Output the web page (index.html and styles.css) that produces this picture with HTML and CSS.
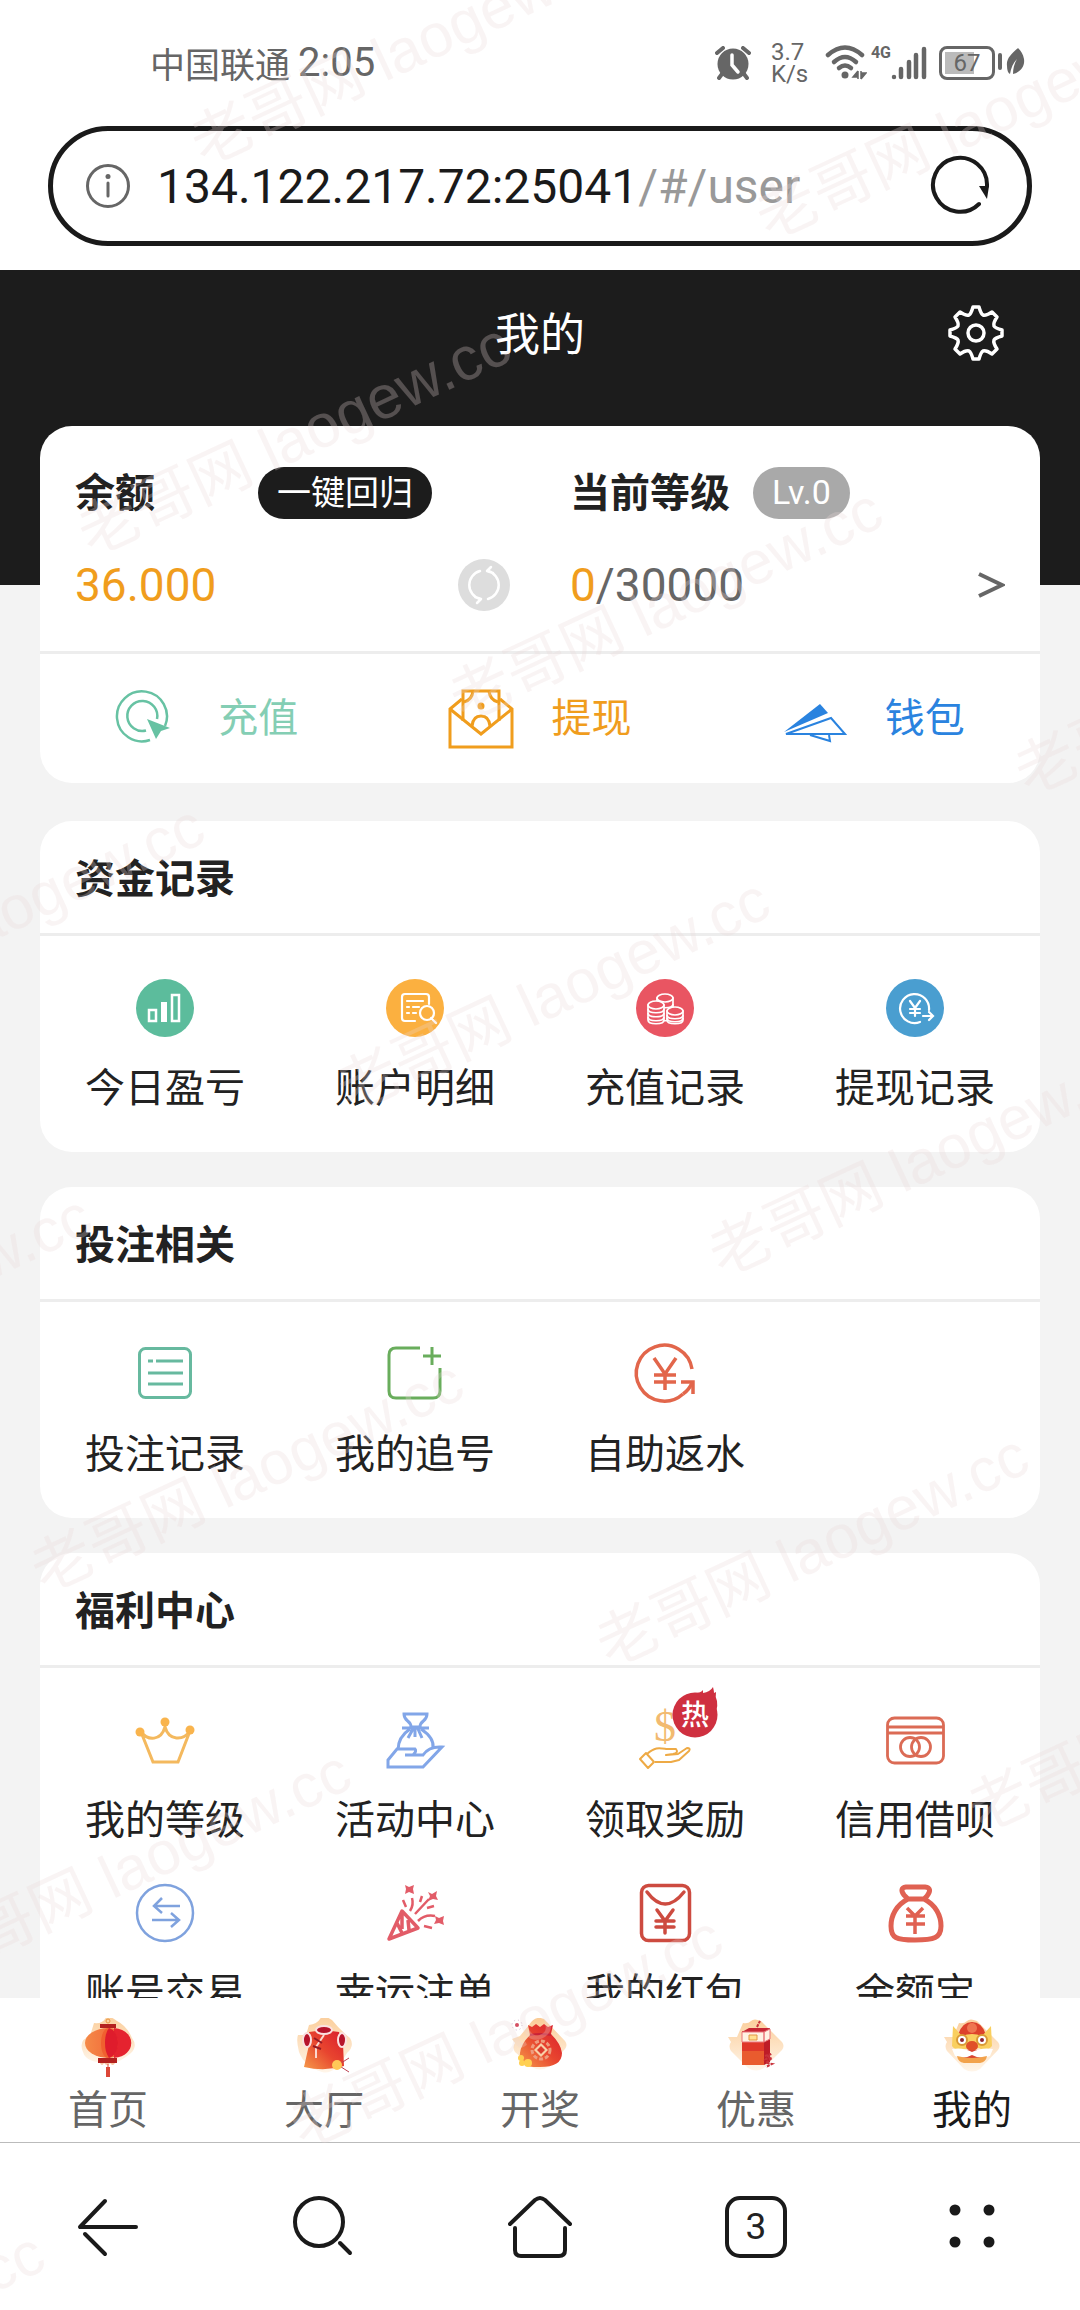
FILE: index.html
```html
<!DOCTYPE html>
<html lang="zh-CN">
<head>
<meta charset="utf-8">
<meta name="viewport" content="width=device-width, initial-scale=1">
<title>我的</title>
<link rel="stylesheet" href="styles.css">
</head>
<body>
<div class="screen">
  <div class="status">
    <span class="carrier">中国联通<span class="time">2:05</span></span>
    <div class="status-icons">
      <svg width="36" height="34" viewBox="0 0 36 34" aria-hidden="true"><circle cx="18" cy="18" r="15.500" fill="#666"/><path d="M2 7l6-5M34 7l-6-5M7 28l-3 4M29 28l3 4" stroke="#666" stroke-width="4" stroke-linecap="round"/><path d="M17 9v10l6 7" fill="none" stroke="#fff" stroke-width="3.500" stroke-linecap="round"/></svg>
      <span class="speed"><span>3.7</span><span>K/s</span></span>
      <svg width="42" height="36" viewBox="0 0 42 36" aria-hidden="true"><g fill="none" stroke="#666" stroke-width="4.500" stroke-linecap="round"><path d="M3 10Q20-5 37 10"/><path d="M9 17Q20 7 31 17"/><path d="M14 23Q20 18 26 23"/></g><circle cx="20" cy="30" r="3.500" fill="#666"/><path d="M33 26v8M33 26l-5 6h5M36 34v-8M36 34l5-6h-5" stroke="#666" stroke-width="1.500" fill="#666"/></svg>
      <span class="net">4G</span>
      <svg width="36" height="34" viewBox="0 0 36 34" aria-hidden="true"><path d="M3 31v0M10 23v8M18 16v15M25 9v22M33 3v28" stroke="#666" stroke-width="4.500" stroke-linecap="round"/></svg>
      <span class="battery"><span>67</span></span>
      <svg class="leaf" width="27" height="30" viewBox="0 0 27 30" aria-hidden="true"><path d="M2 7v13" stroke="#666" stroke-width="4" stroke-linecap="round"/><path d="M20 0C13 6 8 11 9 18c0 4 1 7 3 8 1-6 3-11 7-15-3 5-4 10-4 15 8-2 12-8 11-15-1-5-3-8-6-11z" fill="#666"/></svg>
    </div>
  </div>

  <div class="urlbar">
    <svg width="46" height="46" viewBox="0 0 46 46" aria-hidden="true"><circle cx="23" cy="23" r="20.500" fill="none" stroke="#666" stroke-width="3"/><circle cx="23" cy="13.500" r="2.500" fill="#666"/><path d="M23 20v13" stroke="#666" stroke-width="3" stroke-linecap="round"/></svg>
    <button class="address" type="button">134.122.217.72:25041<span>/#/user</span></button>
    <button class="icon-btn" type="button" aria-label="刷新"><svg width="62" height="62" viewBox="0 0 62 62"><path d="M50 49A27 27 0 1 1 58 31" fill="none" stroke="#1a1a1a" stroke-width="4" stroke-linecap="round"/><path d="M50 31h10l-2 13z" fill="#1a1a1a"/></svg></button>
  </div>

  <header class="topbar">
    <h1>我的</h1>
    <button class="icon-btn" type="button" aria-label="设置"><svg width="56" height="56" viewBox="0 0 56 56" fill="none" stroke="#fff" stroke-width="3.500" stroke-linejoin="round"><path d="M25 2h6q2 7 4 8 3 1 9-3l5 5q-4 6-3 9 1 2 8 4v6q-7 2-8 4-1 3 3 9l-5 5q-6-4-9-3-2 1-4 8h-6q-2-7-4-8-3-1-9 3l-5-5q4-6 3-9-1-2-8-4v-6q7-2 8-4 1-3-3-9l5-5q6 4 9 3 2-1 4-8z"/><circle cx="28" cy="28" r="8"/></svg></button>
  </header>

  <main class="content">
    <section class="card account">
      <div class="summary">
        <div class="line">
          <h2>余额</h2>
          <button class="pill pill-dark" type="button">一键回归</button>
        </div>
        <div class="line">
          <h2>当前等级</h2>
          <span class="pill pill-level">Lv.0</span>
        </div>
        <div class="line spread">
          <span class="num gold">36.000</span>
          <button class="icon-btn" type="button" aria-label="刷新余额"><svg width="52" height="52" viewBox="0 0 52 52"><circle cx="26" cy="26" r="26" fill="#ddd"/><g fill="none" stroke="#fff" stroke-width="2.500" stroke-linecap="round" stroke-linejoin="round"><path d="M22 12A14.500 14.500 0 0 0 22 40M30 40a14.500 14.500 0 0 0 0-28M17 38l6 2-4 4M35 14l-6-2 4-4"/></g></svg></button>
        </div>
        <a class="line spread" href="#level"><span class="num"><span class="gold">0</span>/30000</span>
          <svg width="27" height="26" viewBox="0 0 27 26" aria-hidden="true"><path d="M1 2l23 11L1 24" fill="none" stroke="#666" stroke-width="4"/></svg></a>
      </div>
      <nav class="actions">
        <a class="mint" href="#recharge"><svg width="66" height="60" viewBox="0 0 66 60" fill="none" stroke="#67c2a3" stroke-width="2.500"><path d="M35 51A25 25 0 1 1 50 37"/><path d="M31 41.500A15 15 0 1 1 42 30"/><path d="M32 30l23 9-9 3-5 8z" fill="#67c2a3" stroke="none"/></svg><span>充值</span></a>
        <a class="gold" href="#withdraw"><svg width="66" height="60" viewBox="0 0 66 60" fill="none" stroke="#f09d1d" stroke-width="3"><path d="M15 32V2h36v30"/><path d="M14 10L2 20v38h62V20L52 10"/><path d="M2 20l31 25 31-25"/><path d="M16 13q8-2 9-11M50 13q-8-2-9-11M24 37q1-10 9-10t9 10"/><circle cx="33" cy="17" r="3.500" fill="#f09d1d" stroke="none"/></svg><span>提现</span></a>
        <a class="blue" href="#wallet"><svg width="66" height="60" viewBox="0 0 66 60" fill="none" stroke="#2a83df" stroke-width="2"><path d="M2 43L38 15l8 9z" fill="#2a83df" stroke="none"/><path d="M4 45l45-16 14 16z"/><path d="M28 46l20 6-1-6"/></svg><span>钱包</span></a>
      </nav>
    </section>

    <section class="card">
      <h2 class="card-title">资金记录</h2>
      <div class="grid">
        <a href="#today"><svg viewBox="0 0 60 60"><circle cx="30" cy="30" r="29" fill="#5cbc9c"/><path d="M14 32h7v11h-7z" fill="none" stroke="#fff" stroke-width="2.500"/><path d="M26 24h6v20h-6z" fill="#fff"/><path d="M37 17h7v26h-7z" fill="none" stroke="#fff" stroke-width="2.500"/></svg>今日盈亏</a>
        <a href="#detail"><svg viewBox="0 0 60 60" fill="none"><circle cx="30" cy="30" r="29" fill="#fbb040"/><g stroke="#fff" stroke-width="2.200" stroke-linecap="round"><path d="M44 26v-7q0-3-3-3H20q-3 0-3 3v21q0 3 3 3h10M22 23h16M22 29h2M28 29h6M22 35h2M28 35h3"/><circle cx="42" cy="35" r="7"/><path d="M46 40l5 5"/></g></svg>账户明细</a>
        <a href="#recharge-log"><svg viewBox="0 0 60 60" fill="none"><circle cx="30" cy="30" r="29" fill="#e95562"/><g stroke="#fff" stroke-width="1.700" fill="#e95562"><path d="M22 20v19c0 5 16 5 16 0V20z"/><ellipse cx="30" cy="20" rx="8" ry="4"/><path d="M22 26c0 5 16 5 16 0"/><path d="M13 27v15c0 5 16 5 16 0V27z"/><path d="M13 31c0 5 16 5 16 0M13 35c0 5 16 5 16 0M13 39c0 5 16 5 16 0"/><ellipse cx="21" cy="27" rx="8" ry="4"/><path d="M32 33v9c0 5 16 5 16 0v-9z"/><path d="M32 37c0 5 16 5 16 0M32 40c0 5 16 5 16 0"/><ellipse cx="40" cy="33" rx="8" ry="4"/></g></svg>充值记录</a>
        <a href="#withdraw-log"><svg viewBox="0 0 60 60" fill="none"><circle cx="30" cy="30" r="29" fill="#4a9ed0"/><g stroke="#fff" stroke-width="2.200" stroke-linecap="round"><path d="M35 44A14.500 14.500 0 1 1 44 32"/><path d="M25 23l5 7 5-7M30 30v8M25 31h10M25 35h10M38 38h9M44 34l4 4-4 4"/></g></svg>提现记录</a>
      </div>
    </section>

    <section class="card">
      <h2 class="card-title">投注相关</h2>
      <div class="grid">
        <a href="#bets"><svg viewBox="0 0 60 60" fill="none" stroke="#67b99f" stroke-width="3"><rect x="4.500" y="4.500" width="51" height="49" rx="6"/><path d="M13 17h5M21 17h27M13 29h35M13 40h35"/></svg>投注记录</a>
        <a href="#chase"><svg viewBox="0 0 60 60" fill="none" stroke="#69ad5c" stroke-width="3"><path d="M35 4H11q-7 0-7 7v36q0 7 7 7h37q7 0 7-7V24M38 12h18M47 3v18"/></svg>我的追号</a>
        <a href="#rebate"><svg viewBox="0 0 60 60" fill="none" stroke="#e2664b" stroke-width="3.500"><path d="M57 25A28 28 0 1 0 48 50"/><path d="M46 38h12v12"/><path d="M57 39q-3 7-9 11"/><path d="M19 14l11 16 11-16M30 30v16M19 31h22M19 38h22"/></svg>自助返水</a>
      </div>
    </section>

    <section class="card">
      <h2 class="card-title">福利中心</h2>
      <div class="grid">
        <a href="#my-level"><svg viewBox="0 0 60 60" fill="none" stroke="#f4b95e" stroke-width="3"><path d="M6 22l12 30h25l12-31c-7 10-21 10-25-4-4 14-17 14-24 5z"/><g fill="#f9b44d" stroke="none"><circle cx="5" cy="22" r="4.500"/><circle cx="30" cy="12" r="4.500"/><circle cx="55" cy="20" r="4.500"/></g></svg>我的等级</a>
        <a href="#events"><svg viewBox="0 0 60 60" fill="none" stroke="#82a6e8" stroke-width="3"><path d="M19 4h23c0 8-7 6-7 13h-9c0-7-7-5-7-13zM17 18h27M25 19c-9 6-12 13-12 21M36 19c9 6 13 12 12 19M30 19v8M28 19l-5 9M33 19l4 9"/><path d="M3 50l9-11h18q2 2-2 6h-8 18q6-9 19-8L38 57H3z"/></svg>活动中心</a>
        <a href="#rewards"><svg viewBox="0 0 60 60" fill="none"><text class="dollar" x="30" y="31" text-anchor="middle">$</text><path d="M5 49l6-6 8 9-6 6zM12 44c8-7 12-6 19-5h10q3 4-3 5l-7 1 12-1 9-6q4 0 2 3L44 50l-8 2H20" stroke="#eeaa45" stroke-width="2" stroke-linejoin="round"/><circle cx="60" cy="5" r="22.500" fill="#cf3040"/><path d="M60-17q6 0 8-3v3q7-1 10-6 1 4 1 6l2-1q-1 5 1 9 1 5-1 11z" fill="#cf3040"/><text class="hot" x="60" y="15" text-anchor="middle">热</text></svg>领取奖励</a>
        <a href="#credit"><svg viewBox="0 0 60 60" fill="none" stroke="#db6b55" stroke-width="2.800"><rect x="2.500" y="8" width="56" height="45" rx="7"/><path d="M3 17h55M3 23h55"/><circle cx="25" cy="37" r="9.500"/><circle cx="36" cy="37" r="9.500"/></svg>信用借呗</a>
        <a href="#trade"><svg viewBox="0 0 60 60" fill="none" stroke="#7fa2de" stroke-width="2.500"><circle cx="30" cy="30" r="28"/><path d="M45 23H19M27 15l-8 8 8 7M17 37h26M36 30l8 7-8 7"/></svg>账号交易</a>
        <a href="#lucky"><svg viewBox="0 0 60 60" fill="none" stroke="#e25c68" stroke-width="3.500" stroke-linejoin="round"><path d="M4 56l13-28 16 17zM12 40l5 10M17 29v17M23 37l1 10"/><g stroke-width="2.500"><path d="M25 28q4-6 2-13M30 31l14-15M33 38q7-7 17-5M18 17l3 7M35 19l2-6M42 25l7-2M39 43l8 2"/></g><path d="M20 2l4 2 5-2-1 4 1 5-5-2-4 2 1-5zM43 9l4 2 5-3-1 5 2 4-5-1-5 2 2-5zM50 33l4 2 5-2-1 5 1 4-5-2-5 1 2-4z" fill="#e25c68" stroke="none"/></svg>幸运注单</a>
        <a href="#packet"><svg viewBox="0 0 60 60" fill="none" stroke="#cd4b40" stroke-width="3.500" stroke-linecap="round"><rect x="6.500" y="2.500" width="48" height="55" rx="7"/><path d="M12 9q18 24 37 0M22 27l8 11 8-11M30 38v12M21 38h18M21 44h18"/></svg>我的红包</a>
        <a href="#yuebao"><svg viewBox="0 0 60 60" fill="none" stroke="#e06152" stroke-width="5" stroke-linejoin="round"><path d="M21 4h19q8 1 2 9l-3 3c12 6 17 17 17 27 0 12-7 14-26 14S6 55 6 43c0-10 5-21 17-27l-4-4q-5-7 2-8zM23 16h16"/><path d="M22 25l8 8 8-8M30 33v18M21 33h19M21 41h19" stroke-width="3.500"/></svg>余额宝</a>
      </div>
    </section>
  </main>

  <svg class="defs" width="0" height="0" aria-hidden="true">
    <defs>
      <linearGradient id="red" x1="1" y1="0" x2="0" y2="1"><stop offset="0" stop-color="#d91b2d"/><stop offset=".5" stop-color="#e8452f"/><stop offset="1" stop-color="#f59a4a"/></linearGradient>
      <linearGradient id="cloud" x1="0" y1="0" x2="0" y2="1"><stop offset="0" stop-color="#fac283"/><stop offset="1" stop-color="#fff3e4"/></linearGradient>
      <linearGradient id="lantern"><stop offset="0" stop-color="#f58a48"/><stop offset="1" stop-color="#ee5530"/></linearGradient>
    </defs>
  </svg>

  <nav class="tabs">
    <a href="#home"><svg viewBox="0 0 60 60"><path d="M16 5q8 1 11-4t12 2q10 5 15 17 6 8-1 15-14 12-23 10Q8 45 5 34 0 22 12 18z" fill="url(#cloud)" opacity=".8"/><ellipse cx="30" cy="25" rx="23" ry="15" fill="url(#lantern)"/><path d="M36 10c23 2 23 28 0 30z" fill="#e5232f"/><path d="M30 10c13 4 13 26 0 30-5 0-7-9-7-15s2-14 7-15z" fill="#f0602f"/><path d="M31 10c12 4 12 26 0 30-3-5-4-9-4-15s1-11 4-15z" fill="#df1c2c"/><path d="M22 6h16v4H22zM20 40h19v5H20z" fill="#b3201e"/><path d="M22 45q2 4 4 0 3 4 6 0 3 4 5 0" fill="#f8c3a2"/><path d="M30 46v4" stroke="#e44c3a"/><path d="M28 49h4v10h-4z" fill="#dc4637"/><circle cx="30" cy="3" r="2" fill="none" stroke="#e79542"/></svg>首页</a>
    <a href="#hall"><svg viewBox="0 0 60 60"><path d="M15 7q8-1 11-6t12 1q8 10 18 18 5 8-3 15Q40 58 28 54 10 48 5 34 2 22 4 17h8z" fill="url(#cloud)" opacity=".8"/><path d="M15 14l15-2 15 2 4 12 1 22q-19 6-40 1l5-22z" fill="url(#red)"/><ellipse cx="30" cy="12" rx="8" ry="4" fill="#b7142b" stroke="#fbe0e0" stroke-width="2"/><ellipse cx="13" cy="22" rx="4" ry="7" fill="#b7142b" stroke="#fbe0e0" stroke-width="2"/><ellipse cx="48" cy="22" rx="4" ry="7" fill="#b7142b" stroke="#fbe0e0" stroke-width="2"/><path d="M30 17l-8 12v11" stroke="#fbd8cf" stroke-width="2" fill="none"/><path d="M20 20l8 5M19 28l8 3" stroke="#951a25" stroke-width="2"/><path d="M44 47l11-7M44 47l11 7" stroke="#bc4050"/><circle cx="43" cy="47" r="5" fill="#ffc857"/></svg>大厅</a>
    <a href="#draw"><svg viewBox="0 0 60 60"><path d="M19 7q6-10 15-6l21 22q3 4 0 8L38 49q-8 5-16 0L5 34q-3-5 0-9l-3-4 8-3z" fill="url(#cloud)" opacity=".85"/><path d="M18 7l4 2 4-3 4 3 4-3 4 3 5-2-2 9q10 10 11 19 0 14-22 14Q8 50 10 35q1-9 10-18z" fill="url(#red)"/><path d="M20 17q11-2 21 0" stroke="#c92237" stroke-width="2"/><circle cx="31" cy="32" r="9" fill="none" stroke="#ee9c7e" stroke-width="3" stroke-dasharray="4 2"/><path d="M31 25l7 7-7 7-7-7z" fill="#f8d0a8"/><path d="M31 28l4 4-4 4-4-4z" fill="#dc3b2e"/><g fill="#ffd052"><circle cx="11" cy="40" r="3"/><circle cx="18" cy="45" r="4"/><circle cx="12" cy="45" r="3"/></g><circle cx="7" cy="7" r="5" fill="none" stroke="#cfb5d2" stroke-dasharray="1 3"/><circle cx="7" cy="7" r="2" fill="#d45064"/></svg>开奖</a>
    <a href="#offers"><svg viewBox="0 0 60 60"><path d="M17 5q5 1 8-2t10 0l21 21q3 4 0 8L38 50q-8 5-16 0L5 33q-3-5 0-9l-3-5h9z" fill="url(#cloud)" opacity=".8"/><path d="M16 13h22v34H16z" fill="#df382a"/><path d="M16 33h22v14H16z" fill="#ed6b31" opacity=".7"/><path d="M38 13l6-3v34l-6 3z" fill="#bd1c27"/><path d="M16 14l7-4h21l-6 4z" fill="#c62533"/><path d="M16 14h22v10H16zM38 14l6-3v10l-6 3z" fill="#fff2e3" stroke="#e9777a"/><path d="M23 17h8v5h-8z" fill="#ffe191" stroke="#e49544"/><path d="M31 9l3-6M39 38l6-2-5 5 6-1-6 5 6 1-6 3" stroke="#c8323b" stroke-width="2" fill="none" stroke-dasharray="3 1"/></svg>优惠</a>
    <a class="active" href="#me"><svg viewBox="0 0 60 60"><path d="M17 5q5 1 8-2t10 0l21 21q3 4 0 8L38 51q-8 5-16 0L5 33q-3-5 0-9l-3-5h9z" fill="url(#cloud)" opacity=".8"/><path d="M16 17Q20 4 30 4t14 13l-2 12H18z" fill="#dd422c"/><path d="M11 8l9 10q10-4 20 0L49 8l1 20q-6 7-13 2l-14 1q-9 3-13-3z" fill="#f9cf5f"/><circle cx="30" cy="10" r="5" fill="#ef7550"/><g fill="#fff" stroke="#d99a36" stroke-width="2"><circle cx="20" cy="22" r="5"/><circle cx="40" cy="22" r="5"/></g><circle cx="20" cy="22" r="2" fill="#8f2530"/><circle cx="40" cy="22" r="2" fill="#8f2530"/><ellipse cx="30" cy="28" rx="6" ry="5" fill="#e05029"/><path d="M13 32h35l-5 9q-14 6-26 0z" fill="#d94431"/><path d="M10 31q11-2 20 3 10-5 21-3l-3 7q-9 4-18-1-9 5-17 1z" fill="#fff"/><path d="M15 38q15 4 30 0-1 6-7 7H22q-6-1-7-7z" fill="#f2a24b"/></svg>我的</a>
  </nav>

  <nav class="browser-bar">
    <button type="button" aria-label="后退"><svg viewBox="0 0 64 64"><path d="M29 6L4 32h56M9 39l20 20" stroke-linejoin="round"/></svg></button>
    <button type="button" aria-label="搜索"><svg viewBox="0 0 64 64"><circle cx="27" cy="27" r="24"/><path d="M48 48l10 10"/></svg></button>
    <button type="button" aria-label="主页"><svg viewBox="0 0 64 64"><path d="M2 29L27 5q5-4 10 0l25 24M7 33v22q0 6 6 6h38q6 0 6-6V33" stroke-linejoin="round"/></svg></button>
    <button type="button" aria-label="标签页"><span class="count">3</span></button>
    <button type="button" aria-label="菜单"><svg viewBox="0 0 64 64"><g fill="#1a1a1a" stroke="none"><circle cx="15" cy="15" r="5.500"/><circle cx="49" cy="15" r="5.500"/><circle cx="15" cy="47" r="5.500"/><circle cx="49" cy="47" r="5.500"/></g></svg></button>
  </nav>

  <svg class="watermark" aria-hidden="true">
    <g transform="rotate(-25)">
      <text x="114" y="237">老哥网 laogew.cc</text>
      <text x="-153" y="543">老哥网 laogew.cc</text><text x="595" y="543">老哥网 laogew.cc</text>
      <text x="-634" y="850">老哥网 laogew.cc</text><text x="114" y="850">老哥网 laogew.cc</text>
      <text x="-901" y="1156">老哥网 laogew.cc</text><text x="-153" y="1156">老哥网 laogew.cc</text><text x="595" y="1156">老哥网 laogew.cc</text>
      <text x="-634" y="1463">老哥网 laogew.cc</text><text x="114" y="1463">老哥网 laogew.cc</text>
      <text x="-901" y="1769">老哥网 laogew.cc</text><text x="-153" y="1769">老哥网 laogew.cc</text>
      <text x="-1382" y="2076">老哥网 laogew.cc</text><text x="-634" y="2076">老哥网 laogew.cc</text><text x="114" y="2076">老哥网 laogew.cc</text>
    </g>
  </svg>
</div>
</body>
</html>
```
FILE: styles.css
```css
* { box-sizing: border-box; }

body {
  margin: 0;
  background: #fff;
  color: #222;
  font-family: Roboto, "Noto Sans CJK SC", sans-serif;
  font-size: 40px;
}

a { color: inherit; text-decoration: none; }

button {
  padding: 0;
  border: 0;
  background: none;
  color: inherit;
  font: inherit;
  cursor: pointer;
}

svg { display: block; flex: none; }

h1, h2 { margin: 0; }

.screen {
  position: relative;
  display: flex;
  flex-direction: column;
  height: 100vh;
  overflow: hidden;
}

.defs { position: absolute; }

/* phone status bar */
.status {
  display: flex;
  flex: none;
  align-items: center;
  justify-content: space-between;
  height: 126px;
  padding: 0 55px 0 150px;
  color: #666;
}

.carrier {
  display: flex;
  align-items: center;
  gap: 8px;
  padding-bottom: 2px;
  font-size: 35px;
}

.time { font-size: 40px; }

.status-icons { display: flex; align-items: center; }

.speed {
  display: flex;
  flex-direction: column;
  width: 38px;
  margin: 0 16px 0 20px;
  font-size: 24px;
  line-height: 22px;
}

.net {
  align-self: flex-start;
  margin: 0 0 0 4px;
  font-size: 16px;
  font-weight: 700;
  line-height: 24px;
}

.battery {
  width: 56px;
  height: 34px;
  margin: 0 3px 0 12px;
  padding: 3px;
  border: 3px solid #666;
  border-radius: 8px;
}

.battery span {
  display: block;
  background: linear-gradient(to right, #bbb 67%, transparent 67%);
  font-size: 24px;
  line-height: 22px;
  text-align: center;
}

/* address bar */
.urlbar {
  display: flex;
  flex: none;
  align-items: center;
  gap: 26px;
  height: 120px;
  margin: 0 48px 24px;
  padding: 0 36px 0 32px;
  border: 5px solid #1a1a1a;
  border-radius: 60px;
}

.address {
  flex: 1;
  min-width: 0;
  color: #1a1a1a;
  font-size: 48px;
  text-align: left;
}

.address span { color: #999; }

/* page header */
.topbar {
  display: grid;
  flex: none;
  grid-template-columns: 1fr auto 1fr;
  align-items: center;
  height: 126px;
  padding: 0 76px;
  background: #1c1c1c;
  color: #fff;
}

.topbar h1 {
  grid-column: 2;
  padding-bottom: 4px;
  font-size: 45px;
  font-weight: 400;
}

.topbar .icon-btn { justify-self: end; }

.content {
  display: flex;
  flex: 1;
  flex-direction: column;
  gap: 35px;
  min-height: 0;
  overflow-y: auto;
  padding: 30px 40px 35px;
  background: linear-gradient(#1c1c1c 189px, #f3f3f3 189px);
  scrollbar-width: none;
}

.card {
  flex: none;
  border-radius: 32px;
  background: #fff;
}

/* balance and level */
.account { margin-bottom: 3px; }

.summary {
  display: grid;
  grid-template-columns: 1fr 1fr;
  gap: 40px 60px;
  padding: 41px 35px 40px;
  border-bottom: 3px solid #ededed;
}

.line {
  display: flex;
  align-items: center;
  height: 52px;
}

.line h2, .card-title { font-size: 40px; font-weight: 700; }
.line h2 { padding-bottom: 6px; }

.spread { justify-content: space-between; }

.pill {
  height: 52px;
  padding: 0 19px;
  border-radius: 26px;
  color: #fff;
  font-size: 34px;
  line-height: 50px;
}

.pill-dark { margin-left: 103px; background: #1c1c1c; }
.pill-level { margin-left: 23px; background: #a9a9a9; }

.num { color: #666; font-size: 46px; }
.gold { color: #f09d1d; }
.mint { color: #84ceb4; }
.blue { color: #2a83df; }

.actions {
  display: grid;
  grid-template-columns: repeat(3, 1fr);
  height: 129px;
}

.actions a {
  display: flex;
  align-items: center;
  justify-content: center;
  gap: 37px;
}

.actions span { padding-bottom: 8px; }

/* shortcut cards */
.card-title {
  padding: 29px 35px 23px;
  border-bottom: 3px solid #ededed;
  line-height: 60px;
}

.grid {
  display: grid;
  grid-template-columns: repeat(4, 1fr);
  row-gap: 35px;
  padding: 42px 0 36px;
}

.grid a {
  display: flex;
  flex-direction: column;
  align-items: center;
  gap: 23px;
  line-height: 55px;
}

.grid svg {
  width: 60px;
  height: 60px;
  overflow: visible;
}

.dollar {
  fill: #f2ba70;
  font-family: "Liberation Serif", serif;
  font-size: 44px;
}

.hot { fill: #fff; font-size: 28px; font-weight: 500; }

/* site tabs */
.tabs {
  display: grid;
  flex: none;
  grid-template-columns: repeat(5, 1fr);
  padding: 20px 0 7px;
  background: #fff;
  color: #666;
}

.tabs a {
  display: flex;
  flex-direction: column;
  align-items: center;
  gap: 9px;
  line-height: 48px;
}

.tabs svg { width: 60px; height: 60px; }
.tabs .active { color: #1a1a1a; }

/* browser controls */
.browser-bar {
  display: grid;
  flex: none;
  grid-template-columns: repeat(5, 1fr);
  justify-items: center;
  padding: 52px 0 51px;
  border-top: 1px solid #bbb;
}

.browser-bar svg {
  width: 64px;
  height: 64px;
  fill: none;
  stroke: #1a1a1a;
  stroke-width: 4;
  stroke-linecap: round;
}

.count {
  display: block;
  width: 62px;
  height: 62px;
  border: 4px solid #1a1a1a;
  border-radius: 15px;
  font-size: 37px;
  font-weight: 400;
  line-height: 54px;
}

.watermark {
  position: absolute;
  inset: 0;
  width: 100%;
  height: 100%;
  pointer-events: none;
}

.watermark text {
  fill: rgba(232, 214, 214, 0.28);
  font-family: "Liberation Sans", "Noto Sans CJK SC", sans-serif;
  font-size: 61px;
}
```
